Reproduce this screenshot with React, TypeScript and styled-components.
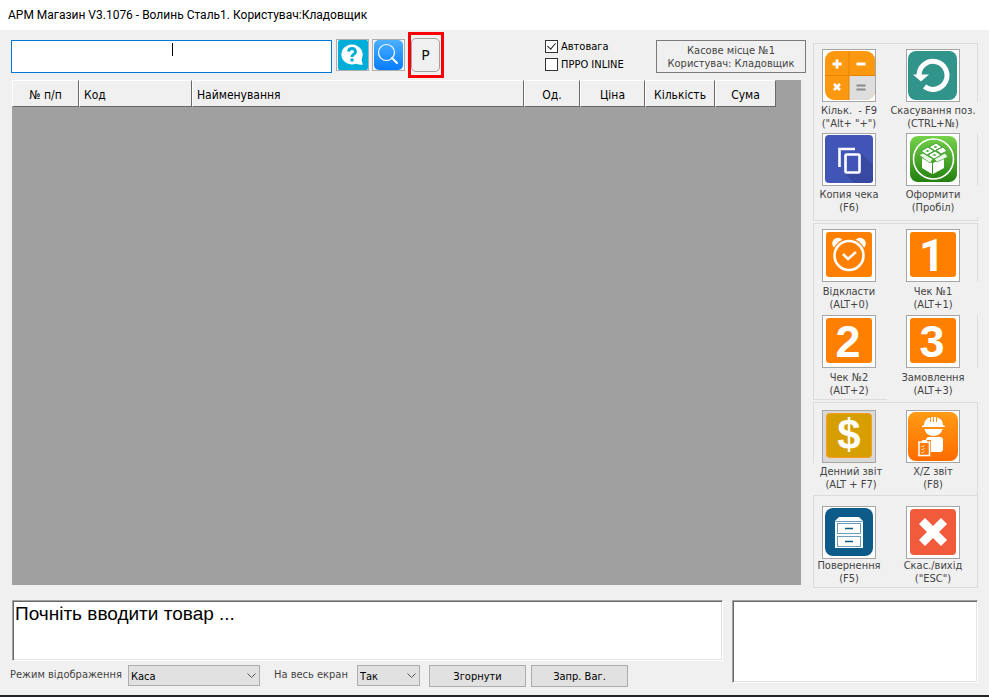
import React from "react";
import styled, { createGlobalStyle, css } from "styled-components";

const ui = '"DejaVu Sans Condensed", "Noto Sans", sans-serif';

const GlobalStyle = createGlobalStyle`
  *, *::before, *::after { box-sizing: border-box; }
  body { margin: 0; background: #f0f0f0; }
  button, input, select, textarea { font: inherit; color: inherit; margin: 0; border-radius: 0; }
`;

const Page = styled.div`
  display: flex;
  flex-direction: column;
  min-height: 100vh;
  background: #f0f0f0;
  border-bottom: 2px solid #222326;
  font: 11px/13px ${ui};
  color: #444;
`;

const TitleBar = styled.header`
  height: 30px;
  padding: 0 8px;
  background: #fff;
  color: #000;
  font: 12px/30px Roboto, "Noto Sans", sans-serif;
  white-space: nowrap;
`;

const Main = styled.main`
  display: flex;
  gap: 7px;
  padding: 0 11px;
`;

const Work = styled.section`
  flex: 1;
  min-width: 0;
  display: flex;
  flex-direction: column;
`;

const Toolbar = styled.div`
  display: flex;
  align-items: center;
  height: 50px;
`;

const SearchField = styled.div`
  position: relative;
  flex: 0 1 321px;
  height: 33px;
  margin: 2px 4px 0 0;
`;

const SearchInput = styled.input`
  display: block;
  width: 100%;
  height: 100%;
  border: 1px solid #0078d7;
  background: #fff;
  text-align: center;
  caret-color: transparent;
  outline: none;
`;

const Caret = styled.span`
  position: absolute;
  left: 50%;
  top: 3px;
  width: 1px;
  height: 13px;
  background: #000;
`;

const ToolButton = styled.button`
  width: 33px;
  height: 32px;
  margin-right: 3px;
  padding: 0;
  border: 1px solid #adadad;
  background: #f4f4f4;
  svg { display: block; }
`;

const Highlight = styled.div`
  padding: 3px 0;
  height: 46px;
  width: 36px;
  border: 3px solid #fa0006;
`;

const PButton = styled.button`
  display: block;
  width: 29px;
  height: 34px;
  padding: 0;
  border: 1px solid #a0a0a0;
  border-radius: 5px;
  background: #f0f0f0;
  color: #111;
  font: 14px/32px "DejaVu Sans", sans-serif;
`;

const Checks = styled.div`
  display: grid;
  gap: 5px;
  margin-left: auto;
  width: 111px;
  color: #000;
`;

const CheckLabel = styled.label`
  display: flex;
  gap: 3px;
  white-space: nowrap;
`;

const CheckBox = styled.input`
  appearance: none;
  position: relative;
  width: 13px;
  height: 13px;
  border: 1px solid #333;
  background: #fff;
  &:checked::after {
    content: "";
    position: absolute;
    left: 3px;
    top: 0;
    width: 5px;
    height: 8px;
    border: solid #222;
    border-width: 0 1px 1px 0;
    transform: rotate(40deg);
  }
`;

const Station = styled.div`
  width: 150px;
  height: 33px;
  margin-top: 2px;
  padding-top: 3px;
  border: 1px solid #7a7a7a;
  text-align: center;
  white-space: nowrap;
`;

const Sheet = styled.div`
  flex: 1;
  margin: 0 5px 3px 1px;
  padding-right: 25px;
  background: #a0a0a0;
`;

const Table = styled.table`
  width: 100%;
  table-layout: fixed;
  border-collapse: separate;
  border-spacing: 0;
`;

const Th = styled.th<{ $w?: number; $left?: boolean }>`
  ${(p) => p.$w && css`width: ${p.$w}px;`}
  height: 27px;
  padding: 2px 4px 0;
  border: 1px solid #fff;
  border-right-color: #696969;
  border-bottom-color: #696969;
  background: #f0f0f0;
  color: #000;
  font: 12px/14px ${ui};
  text-align: ${(p) => (p.$left ? "left" : "center")};
  white-space: nowrap;
`;

const Side = styled.aside`
  width: 165px;
  padding-top: 13px;
`;

const Group = styled.div<{ $top: number; $bottom: number; $after: number; $joined?: boolean }>`
  display: grid;
  grid-template-columns: 70px 84px;
  column-gap: 7px;
  padding: ${(p) => p.$top}px 0 ${(p) => p.$bottom}px;
  margin-bottom: ${(p) => p.$after}px;
  border: 1px solid #dcdcdc;
  ${(p) => p.$joined && css`border-bottom: 0;`}
`;

const Tile = styled.div`
  display: flex;
  flex-direction: column;
  align-items: center;
`;

const TileButton = styled.button<{ $grey?: boolean }>`
  width: 54px;
  height: 53px;
  padding: 0;
  border: 1px solid #a6a6a6;
  background: ${(p) => (p.$grey ? "#d9d9d9" : "#fff")};
  svg { display: block; }
`;

type Cover = "left" | "right" | "corner";

const Caption = styled.label<{ $pad: number; $h: number; $cover?: Cover }>`
  align-self: stretch;
  display: flex;
  justify-content: center;
  height: ${(p) => p.$h}px;
  padding-top: ${(p) => p.$pad}px;
  text-align: center;
  white-space: pre;
  ${(p) => p.$cover && css`background: #f0f0f0;`}
  ${(p) => p.$cover === "right" && css`margin: 0 -4px;`}
  ${(p) => p.$cover === "corner" && css`margin: 0 -4px -3px;`}
  ${(p) => p.$cover === "left" && css`margin-left: -2px; padding-left: 6px;`}
`;

const Footer = styled.footer`
  display: flex;
  gap: 9px;
  padding: 12px 11px 0 12px;
`;

const FooterLeft = styled.div`
  flex: 1;
  min-width: 0;
`;

const sunken = css`
  display: block;
  border: 1px solid #a0a0a0;
  border-right-color: #fff;
  border-bottom-color: #fff;
  box-shadow: inset 1px 1px #696969, inset -1px -1px #e3e3e3;
  background: #fff;
  resize: none;
  outline: none;
`;

const Message = styled.textarea`
  ${sunken}
  width: 100%;
  height: 61px;
  padding: 2px 2px;
  color: #000;
  font: 19px/22px "Liberation Sans", sans-serif;
`;

const Notes = styled.textarea`
  ${sunken}
  width: 246px;
  height: 83px;
`;

const Controls = styled.div`
  display: flex;
  margin: 4px 0 0 -2px;
  white-space: nowrap;
`;

const ControlLabel = styled.label<{ $w: number }>`
  width: ${(p) => p.$w}px;
  padding-top: 3px;
`;

const SelectBox = styled.div<{ $w: number }>`
  position: relative;
  width: ${(p) => p.$w}px;
  height: 21px;
  color: #000;
  svg { position: absolute; right: 4px; top: 8px; pointer-events: none; }
`;

const Select = styled.select`
  appearance: none;
  width: 100%;
  height: 100%;
  padding: 1px 18px 0 2px;
  border: 1px solid #adadad;
  background: #e1e1e1;
`;

const PushButton = styled.button`
  width: 97px;
  height: 22px;
  padding: 0;
  border: 1px solid #adadad;
  background: #e1e1e1;
  color: #000;
`;

const Spacer = styled.span<{ $w: number }>`
  flex: 0 0 ${(p) => p.$w}px;
`;

const Icon = ({ children }: { children: React.ReactNode }) => (
  <svg width="52" height="51" viewBox="0 0 52 51" aria-hidden="true">{children}</svg>
);

const CalcIcon = () => (
  <Icon>
    <clipPath id="calc"><rect x="2" y="1" width="50" height="49" rx="9" /></clipPath>
    <g clipPath="url(#calc)">
      <rect width="52" height="51" fill="#fb9810" />
      <rect x="26" y="26" width="26" height="25" fill="#dedede" />
      <path d="M26 1v49M2 25.500h50" stroke="#e58400" />
    </g>
    <path d="M9.500 14h9M14 9.500v9M33.500 14h9M11 34l6 6M17 34l-6 6" stroke="#fff" strokeWidth="2.800" />
    <path d="M33.500 35.500h9M33.500 39.500h9" stroke="#8a8a8a" strokeWidth="2" />
  </Icon>
);

const UndoIcon = () => (
  <Icon>
    <rect x="1" y="1" width="49" height="49" rx="8" fill="#30948a" />
    <path d="M12 25A14 14 0 1 1 17.500 36.500" fill="none" stroke="#fff" strokeWidth="5" />
    <path d="M6 24.500h16l-8 7z" fill="#fff" />
  </Icon>
);

const CopyIcon = () => (
  <Icon>
    <rect x="2" y="1" width="48" height="48" rx="4" fill="#4155b6" />
    <path d="M37 18L50 31V46Q50 49 46 49H31L21 39z" fill="#3849a2" />
    <path d="M16.500 33V15H32" fill="none" stroke="#fff" strokeWidth="2.600" />
    <rect x="22.500" y="20.500" width="14" height="18" rx="1" fill="#4155b6" stroke="#fff" strokeWidth="2.600" />
  </Icon>
);

const BoxIcon = () => (
  <Icon>
    <linearGradient id="green" x2="0" y2="1">
      <stop stopColor="#74d24a" /><stop offset="1" stopColor="#23800f" />
    </linearGradient>
    <rect x="3" y="2" width="47" height="46" rx="8" fill="url(#green)" />
    <circle cx="26.500" cy="25" r="20" fill="none" stroke="#fff" strokeWidth="1.600" />
    <path d="M15 24l10 5v11l-10-6zM26 29l11-5v10l-11 6z" fill="#fff" />
    <path d="M12 21l4-2 10 6-3 4zM27 25l11-6 3 4-11 5z" fill="#e9f8e2" stroke="#2f9320" strokeWidth=".6" />
    <path d="M14 17l7-4 6 4-7 4zM22 13l7-4 6 4-7 4zM21 21l7-4 6 4-7 4zM29 16l7-3 4 4-6 3z" fill="#fff" stroke="#2f9320" strokeWidth=".8" />
    <path d="M18.500 17l2-1 2 1-2 1zM26.500 13l2-1 2 1-2 1zM25.500 21l2-1 2 1-2 1z" fill="#3ea52a" />
  </Icon>
);

const Orange = () => <rect x="3" y="2" width="46" height="45" rx="3" fill="#ff7f00" />;

const ClockIcon = () => (
  <Icon>
    <Orange />
    <circle cx="15" cy="13.500" r="5.800" fill="#fff" />
    <circle cx="37" cy="13.500" r="5.800" fill="#fff" />
    <circle cx="26" cy="25.500" r="17" fill="#ff7f00" />
    <circle cx="26" cy="25.500" r="14.500" fill="none" stroke="#fff" strokeWidth="2.600" />
    <path d="M20 24l5 5 8-7" fill="none" stroke="#fff" strokeWidth="2.500" />
  </Icon>
);

const DigitIcon = ({ d, family }: { d: string; family: string }) => (
  <Icon>
    <Orange />
    <text x="25" y="41" textAnchor="middle" fill="#fff" fontFamily={family} fontWeight="700" fontSize="45">{d}</text>
  </Icon>
);

const DollarIcon = () => (
  <Icon>
    <rect x="3.500" y="2.500" width="45" height="44" rx="3" fill="#d79e00" stroke="#fb9a20" />
    <text x="26" y="38" textAnchor="middle" fill="#fff" fontFamily="Liberation Sans, sans-serif" fontWeight="700" fontSize="42">$</text>
  </Icon>
);

const WorkerIcon = () => (
  <Icon>
    <linearGradient id="work" x2="0" y2="1">
      <stop stopColor="#ff9b14" /><stop offset="1" stopColor="#ff6b00" />
    </linearGradient>
    <rect x="1" y="1" width="50" height="49" rx="8" fill="url(#work)" />
    <path d="M17 14Q17 8 23 6.500V11H24V6H26V11H27V6H29V11H30V6.500Q36 8 36 14L38 15V16H15V15zM17.500 18H35.500Q34 25 26.500 25T17.500 18z" fill="#fff" />
    <rect x="19" y="26" width="17" height="15" rx="3" fill="#fff" />
    <path d="M10 29h14v17h-14z" fill="#ff7a06" />
    <path d="M12 31h10.500v13.500h-10.500z" fill="none" stroke="#fff" strokeWidth="1.500" />
    <path d="M15 29h5v3h-5z" fill="#fff" />
    <path d="M14.500 35l1 1 2-2M14.500 38l1 1 2-2M14.500 41l1 1 2-2" fill="none" stroke="#fff" strokeWidth=".8" />
  </Icon>
);

const CabinetIcon = () => (
  <Icon>
    <rect x="2" y="1" width="48" height="48" rx="8" fill="#0d5b88" />
    <path d="M16 10h20l4 4v27H12V14z" fill="#fff" />
    <g fill="#fff" stroke="#6d9dbb">
      <path d="M12.500 14.500h27" />
      <rect x="14.500" y="16.500" width="23" height="10" />
      <rect x="14.500" y="29.500" width="23" height="10" />
    </g>
    <path d="M22 21.500h8M22 34.500h8" stroke="#0d5b88" strokeWidth="1.500" />
  </Icon>
);

const CloseIcon = () => (
  <Icon>
    <rect x="3" y="2" width="46" height="46" rx="4" fill="#f05b3b" />
    <path d="M15 14l22 22M37 14l-22 22" stroke="#fff" strokeWidth="8.500" />
  </Icon>
);

const Chevron = () => (
  <svg width="9" height="6" viewBox="0 0 9 6" aria-hidden="true">
    <path d="M.5 .5l4 4 4-4" fill="none" stroke="#555" />
  </svg>
);

type Item = { id: string; text: string; icon: React.ReactNode; cover?: Cover; grey?: boolean; h?: number };
type GroupData = { top: number; bottom: number; after: number; pad: number; h: number; joined?: boolean; items: Item[] };

const groups: GroupData[] = [
  {
    top: 5, bottom: 3, after: 2, pad: 2, h: 31,
    items: [
      { id: "qty", text: 'Кільк.  - F9\n("Alt+ "+")', icon: <CalcIcon /> },
      { id: "undo", text: "Скасування поз.\n(CTRL+№)", icon: <UndoIcon />, cover: "right" },
      { id: "copy", text: "Копия чека\n(F6)", icon: <CopyIcon /> },
      { id: "issue", text: "Оформити\n(Пробіл)", icon: <BoxIcon />, cover: "right" },
    ],
  },
  {
    top: 5, bottom: 0, after: 2, pad: 3, h: 33,
    items: [
      { id: "hold", text: "Відкласти\n(ALT+0)", icon: <ClockIcon /> },
      { id: "c1", text: "Чек №1\n(ALT+1)", icon: <DigitIcon d="1" family="Roboto, sans-serif" />, cover: "right" },
      { id: "c2", text: "Чек №2\n(ALT+2)", icon: <DigitIcon d="2" family="Liberation Sans, sans-serif" />, h: 31 },
      { id: "c3", text: "Замовлення\n(ALT+3)", icon: <DigitIcon d="3" family="Liberation Sans, sans-serif" />, cover: "corner", h: 34 },
    ],
  },
  {
    top: 7, bottom: 0, after: 0, pad: 2, h: 32, joined: true,
    items: [
      { id: "day", text: "Денний звіт\n(ALT + F7)", icon: <DollarIcon />, cover: "left", grey: true },
      { id: "xz", text: "X/Z звіт\n(F8)", icon: <WorkerIcon /> },
    ],
  },
  {
    top: 10, bottom: 2, after: 0, pad: 0, h: 26,
    items: [
      { id: "ret", text: "Повернення\n(F5)", icon: <CabinetIcon /> },
      { id: "exit", text: 'Скас./вихід\n("ESC")', icon: <CloseIcon /> },
    ],
  },
];

export default function App() {
  return (
    <Page>
      <GlobalStyle />
      <TitleBar>АРМ Магазин V3.1076 - Волинь Сталь1. Користувач:Кладовщик</TitleBar>
      <Main>
        <Work>
          <Toolbar>
            <SearchField>
              <SearchInput type="text" aria-label="Пошук товару" />
              <Caret />
            </SearchField>
            <ToolButton type="button" aria-label="Довідка">
              <svg width="31" height="30" viewBox="0 0 31 30">
                <rect x="1" width="30" height="30" rx="2" fill="#00acd8" />
                <path d="M15 4.500a10.500 10 0 1 0 4 19.200Q23 25 26 24.500Q24.500 22 24.800 18.500A10.500 10 0 0 0 15 4.500z" fill="#fff" />
                <path d="M11.500 11.500Q12 8.500 15 8.500T18.500 11.500Q18.500 13.500 16.500 14.500Q15 15.500 15 17" fill="none" stroke="#00acd8" strokeWidth="3" />
                <rect x="13.500" y="18.500" width="3" height="3" fill="#00acd8" />
              </svg>
            </ToolButton>
            <ToolButton type="button" aria-label="Знайти">
              <svg width="31" height="30" viewBox="0 0 31 30">
                <linearGradient id="find" x2="0" y2="1">
                  <stop stopColor="#4bb0ff" /><stop offset="1" stopColor="#087cff" />
                </linearGradient>
                <rect x="1" y="0" width="29" height="30" rx="5" fill="url(#find)" />
                <circle cx="13.500" cy="12.500" r="8" fill="none" stroke="#fff" strokeWidth="1.200" />
                <path d="M19 18l5 5" stroke="#fff" strokeWidth="2" strokeLinecap="round" />
              </svg>
            </ToolButton>
            <Highlight><PButton type="button">P</PButton></Highlight>
            <Checks>
              <CheckLabel><CheckBox type="checkbox" defaultChecked />Автовага</CheckLabel>
              <CheckLabel><CheckBox type="checkbox" />ПРРО INLINE</CheckLabel>
            </Checks>
            <Station>Касове місце №1<br />Користувач: Кладовщик</Station>
          </Toolbar>
          <Sheet>
            <Table>
              <thead>
                <tr>
                  <Th $w={67}>№ п/п</Th>
                  <Th $w={113} $left>Код</Th>
                  <Th $left>Найменування</Th>
                  <Th $w={56}>Од.</Th>
                  <Th $w={65}>Ціна</Th>
                  <Th $w={70}>Кількість</Th>
                  <Th $w={61}>Сума</Th>
                </tr>
              </thead>
            </Table>
          </Sheet>
        </Work>
        <Side>
          {groups.map((g) => (
            <Group key={g.items[0].id} $top={g.top} $bottom={g.bottom} $after={g.after} $joined={g.joined}>
              {g.items.map((it) => (
                <Tile key={it.id}>
                  <TileButton id={it.id} type="button" $grey={it.grey}>{it.icon}</TileButton>
                  <Caption htmlFor={it.id} $pad={g.pad} $h={it.h ?? g.h} $cover={it.cover}>{it.text}</Caption>
                </Tile>
              ))}
            </Group>
          ))}
        </Side>
      </Main>
      <Footer>
        <FooterLeft>
          <Message aria-label="Повідомлення" readOnly value="Почніть вводити товар ..." />
          <Controls>
            <ControlLabel htmlFor="mode" $w={118}>Режим відображення</ControlLabel>
            <SelectBox $w={132}>
              <Select id="mode"><option>Каса</option></Select>
              <Chevron />
            </SelectBox>
            <Spacer $w={14} />
            <ControlLabel htmlFor="full" $w={83}>На весь екран</ControlLabel>
            <SelectBox $w={63}>
              <Select id="full"><option>Так</option></Select>
              <Chevron />
            </SelectBox>
            <Spacer $w={9} />
            <PushButton type="button">Згорнути</PushButton>
            <Spacer $w={5} />
            <PushButton type="button">Запр. Ваг.</PushButton>
          </Controls>
        </FooterLeft>
        <Notes aria-label="Примітки" />
      </Footer>
    </Page>
  );
}
